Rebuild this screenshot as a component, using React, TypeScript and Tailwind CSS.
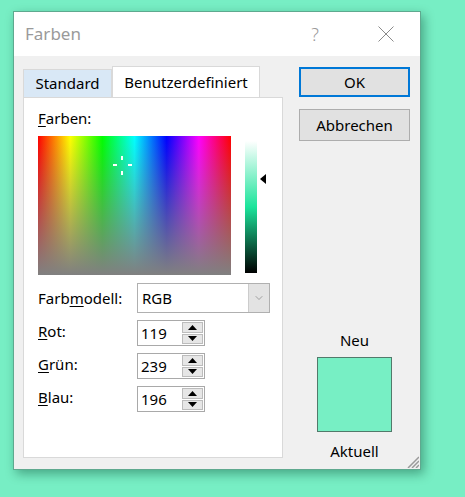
import { ChevronDown } from "lucide-react";

const FONT = "font-['Noto_Sans',_'Liberation_Sans',_sans-serif]";

function Spin({ value }: { value: number }) {
  return (
    <div className="flex h-[26px] w-[68px] border border-[#a9a9a9] bg-white">
      <div className="flex flex-1 items-center pl-[3px] text-[15px] leading-none text-black">{value}</div>
      <div className="flex w-[23px] flex-col gap-[1px] p-[1px]">
        <div className="flex flex-1 items-center justify-center border border-[#bcbcbc] bg-[#e6e6e6]">
          <svg width="9" height="5" viewBox="0 0 9 5">
            <path d="M0 5 L4.5 0 L9 5 Z" fill="#000" />
          </svg>
        </div>
        <div className="flex flex-1 items-center justify-center border border-[#bcbcbc] bg-[#e6e6e6]">
          <svg width="9" height="5" viewBox="0 0 9 5">
            <path d="M0 0 L4.5 5 L9 0 Z" fill="#000" />
          </svg>
        </div>
      </div>
    </div>
  );
}

function Row({ label, rest, value }: { label: string; rest: string; value: number }) {
  return (
    <div className="flex items-start">
      <div className="w-[99px] pt-[1px] text-[15px] leading-[20px]">
        <span className="underline underline-offset-2">{label}</span>
        {rest}
      </div>
      <Spin value={value} />
    </div>
  );
}

export default function App() {
  return (
    <div className={`min-h-[497px] w-full bg-[#77eec4] pl-[13px] pt-[11px] ${FONT}`}>
      <div className="flex h-[459px] w-[408px] flex-col border border-[#5fa98f] shadow-[3px_4px_10px_rgba(0,60,40,0.4)]">
        {/* title bar */}
        <div className="flex h-[44px] items-center bg-white pl-[11px]">
          <span className="text-[17px] text-[#9a9a9a]">Farben</span>
          <span className="ml-auto mr-[59px] text-[18px] font-light text-[#9a9a9a]">?</span>
          <svg width="16" height="16" viewBox="0 0 16 16" className="mr-[26px]">
            <path d="M0.5 0.5 L15.5 15.5 M15.5 0.5 L0.5 15.5" stroke="#8a8a8a" strokeWidth="1" />
          </svg>
        </div>

        {/* body */}
        <div className="relative flex flex-1 bg-[#f0f0f0] pl-[9px] pr-[10px] pt-[10px] pb-[11px] text-black">
          {/* left: tabs + panel */}
          <div className="flex w-[260px] flex-col">
            <div className="flex h-[31px] items-end">
              <div className="flex h-[28px] w-[89px] items-center justify-center border border-b-0 border-[#d9d9d9] bg-[#d9e8f6] text-[15px]">
                Standard
              </div>
              <div className="-mb-[1px] flex h-[32px] w-[148px] items-center justify-center border border-b-0 border-[#d9d9d9] bg-white text-[15px]">
                Benutzerdefiniert
              </div>
            </div>
            <div className="flex flex-1 flex-col border border-[#d9d9d9] bg-white pl-[14px] pt-[10px]">
              <div className="text-[15px] leading-[20px]">
                <span className="underline underline-offset-2">F</span>arben:
              </div>
              <div className="mt-[8px] flex">
                <div className="relative h-[139px] w-[193px] bg-[linear-gradient(to_bottom,rgba(128,128,128,0),#808080),linear-gradient(to_right,#ff0000,#ffff00,#00ff00,#00ffff,#0000ff,#ff00ff,#ff0000)]">
                  <svg width="19" height="19" viewBox="0 0 19 19" className="absolute left-[75px] top-[20px]">
                    <rect x="8" y="0" width="2" height="4" fill="#fff" />
                    <rect x="8" y="15" width="2" height="4" fill="#fff" />
                    <rect x="0" y="8" width="4" height="2" fill="#fff" />
                    <rect x="15" y="8" width="4" height="2" fill="#fff" />
                  </svg>
                </div>
                <div className="ml-[14px] mt-[5px] h-[132px] w-[12px] bg-[linear-gradient(to_bottom,#ffffff,#1ce49b,#000000)]" />
                <svg width="6" height="10" viewBox="0 0 6 10" className="ml-[3px] mt-[38px]">
                  <path d="M6 0 L0 5 L6 10 Z" fill="#000" />
                </svg>
              </div>

              <div className="mt-[8px] flex flex-col gap-[7px]">
                <div className="flex items-center">
                  <div className="w-[99px] text-[15px] leading-[20px]">
                    Farb<span className="underline underline-offset-2">m</span>odell:
                  </div>
                  <div className="flex h-[30px] w-[133px] border border-[#b0b0b0] bg-white">
                    <div className="flex flex-1 items-center pl-[4px] text-[15px]">RGB</div>
                    <div className="flex w-[21px] items-center justify-center border-l border-[#cccccc] bg-[#e3e3e3]">
                      <ChevronDown size={12} strokeWidth={1.2} color="#707070" />
                    </div>
                  </div>
                </div>
                <Row label="R" rest="ot:" value={119} />
                <Row label="G" rest="rün:" value={239} />
                <Row label="B" rest="lau:" value={196} />
              </div>
            </div>
          </div>

          {/* right: buttons + preview */}
          <div className="ml-[16px] flex w-[111px] flex-col items-center">
            <div className="mt-[1px] flex h-[30px] w-full items-center justify-center border-2 border-[#0078d7] bg-[#e1e1e1] text-[15px]">
              OK
            </div>
            <div className="mt-[12px] flex h-[32px] w-full items-center justify-center border border-[#adadad] bg-[#e1e1e1] text-[15px]">
              Abbrechen
            </div>
            <div className="mt-auto text-[15px] leading-[20px]">Neu</div>
            <div className="mt-[7px] h-[75px] w-[75px] border border-[#527a6b] bg-[#77efc4]" />
            <div className="-mb-[3px] mt-[9px] text-[15px] leading-[20px]">Aktuell</div>
          </div>

          <svg width="12" height="12" viewBox="0 0 12 12" className="absolute bottom-[1px] right-[1px]">
            <path d="M12 1 L1 12 M12 5 L5 12 M12 9 L9 12" stroke="#9a9a9a" strokeWidth="1.5" />
          </svg>
        </div>
      </div>
    </div>
  );
}
